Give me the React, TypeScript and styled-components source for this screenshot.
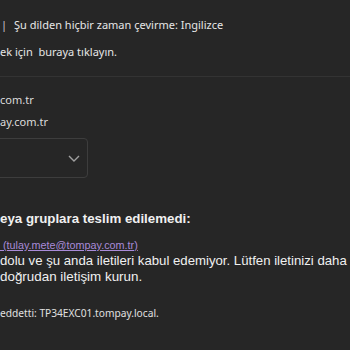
import React from "react";
import styled, { createGlobalStyle } from "styled-components";

const GlobalStyle = createGlobalStyle`
  html, body {
    margin: 0;
    padding: 0;
    background: #262626;
    overflow: hidden;
  }
`;

const Page = styled.div`
  width: 350px;
  height: 350px;
  overflow: hidden;
  background: #262626;
  color: #e6e6e6;
  display: flex;
  flex-direction: column;
`;

const Header = styled.div`
  display: flex;
  flex-direction: column;
  padding-top: 15px;
  border-bottom: 1px solid #333333;
  height: 61px;
  font-family: "Noto Sans", "Segoe UI", sans-serif;
  font-size: 11px;
`;

const TranslateRow = styled.div`
  display: flex;
  align-items: center;
  gap: 7px;
  height: 18px;
  white-space: nowrap;
`;

const Divider = styled.span`
  margin-left: 1px;
  color: #cfcfcf;
`;

const ClickRow = styled.div`
  margin-top: 11px;
  height: 18px;
  white-space: nowrap;
`;

const Recipients = styled.div`
  display: flex;
  flex-direction: column;
  padding-top: 15px;
  gap: 4px;
  font-family: "Noto Sans", "Segoe UI", sans-serif;
  font-size: 11px;
  color: #dcdcdc;
`;

const AddrLine = styled.div`
  height: 18px;
  white-space: nowrap;
`;

const Select = styled.div`
  margin-top: 2px;
  margin-left: -4px;
  width: 92px;
  height: 40px;
  box-sizing: border-box;
  border: 1px solid #3d3d3d;
  border-radius: 4px;
  display: flex;
  align-items: center;
  justify-content: flex-end;
  padding-right: 6px;
`;

const Body = styled.div`
  margin-top: 33px;
  font-family: "Liberation Sans", Arial, sans-serif;
  color: #f0f0f0;
  display: flex;
  flex-direction: column;
`;

const Title = styled.div`
  font-weight: bold;
  font-size: 13.3px;
  white-space: nowrap;
  height: 18px;
`;

const Link = styled.a`
  margin-top: 10px;
  font-size: 10.8px;
  color: #a98bd8;
  text-decoration: underline;
  white-space: nowrap;
  height: 14px;
`;

const Para = styled.div<{ $size: number }>`
  font-size: ${(p) => p.$size}px;
  line-height: 16px;
  white-space: nowrap;
`;

const Footer = styled.div`
  margin-top: 21px;
  font-family: "Noto Sans", "Segoe UI", sans-serif;
  font-size: 10.2px;
  color: #e0e0e0;
  white-space: nowrap;
`;

const Chevron = () => (
  <svg width="14" height="14" viewBox="0 0 14 14" fill="none">
    <path d="M2 5 L7 10 L12 5" stroke="#a0a0a0" strokeWidth="1.4" />
  </svg>
);

export default function App() {
  return (
    <>
      <GlobalStyle />
      <Page>
        <Header>
          <TranslateRow>
            <Divider>|</Divider>
            <span>Şu dilden hiçbir zaman çevirme: Ingilizce</span>
          </TranslateRow>
          <ClickRow>ek için &nbsp;buraya tıklayın.</ClickRow>
        </Header>
        <Recipients>
          <AddrLine>com.tr</AddrLine>
          <AddrLine>ay.com.tr</AddrLine>
          <Select>
            <Chevron />
          </Select>
        </Recipients>
        <Body>
          <Title>eya gruplara teslim edilemedi:</Title>
          <Link href="#">&nbsp;(tulay.mete@tompay.com.tr)</Link>
          <Para $size={13.2}>dolu ve şu anda iletileri kabul edemiyor. Lütfen iletinizi daha</Para>
          <Para $size={13.4}>doğrudan iletişim kurun.</Para>
          <Footer>eddetti: TP34EXC01.tompay.local.</Footer>
        </Body>
      </Page>
    </>
  );
}
